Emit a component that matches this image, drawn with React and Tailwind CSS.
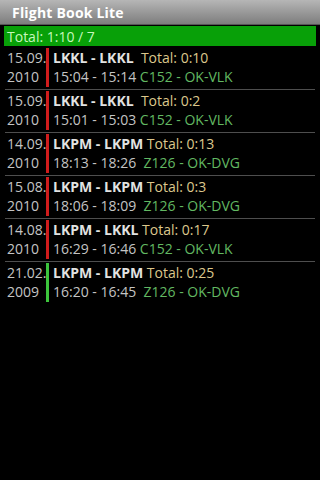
const flights = [
  { date: "15.09.", year: "2010", route: "LKKL - LKKL ", total: "Total: 0:10", time: "15:04 - 15:14", plane: "C152 - OK-VLK", ok: false },
  { date: "15.09.", year: "2010", route: "LKKL - LKKL ", total: "Total: 0:2", time: "15:01 - 15:03", plane: "C152 - OK-VLK", ok: false },
  { date: "14.09.", year: "2010", route: "LKPM - LKPM", total: "Total: 0:13", time: "18:13 - 18:26", plane: " Z126 - OK-DVG", ok: false },
  { date: "15.08.", year: "2010", route: "LKPM - LKPM", total: "Total: 0:3", time: "18:06 - 18:09", plane: " Z126 - OK-DVG", ok: false },
  { date: "14.08.", year: "2010", route: "LKPM - LKKL", total: "Total: 0:17", time: "16:29 - 16:46", plane: "C152 - OK-VLK", ok: false },
  { date: "21.02.", year: "2009", route: "LKPM - LKPM", total: "Total: 0:25", time: "16:20 - 16:45", plane: " Z126 - OK-DVG", ok: true },
];

const FlightRow = ({ f, last }) => (
  <div>
    <div className="flex h-[42px] pt-px">
      <div className="w-[46px] pl-[7px] text-[#c4c4c4] leading-[19px]">
        <div>{f.date}</div>
        <div>{f.year}</div>
      </div>
      <div className={`w-[3px] h-[39px] ${f.ok ? "bg-[#3cc43c]" : "bg-[#d01c1c]"}`} />
      <div className="pl-[4px] leading-[19px] whitespace-pre">
        <div>
          <span className="font-bold text-[#e2e2e2]">{f.route}</span>
          <span className="text-[#dcc78c]"> {f.total}</span>
        </div>
        <div>
          <span className="text-[#c4c4c4]">{f.time}</span>
          <span className="text-[#62b862]"> {f.plane}</span>
        </div>
      </div>
    </div>
    {!last && <div className="mx-[5px] h-px bg-[#4e4e4e]" />}
  </div>
);

export default function App() {
  return (
    <div className="w-[320px] h-[480px] bg-black overflow-hidden font-['Open_Sans','Noto_Sans',sans-serif] text-[14px]">
      <div className="h-[25px] bg-gradient-to-b from-[#b6b6b6] to-[#7e7e7e] border-b border-[#555] flex items-center pl-[12px]">
        <span className="font-bold text-white text-[14px] tracking-[0.2px]">Flight Book Lite</span>
      </div>
      <div className="mx-[4px] mt-px h-[20px] bg-[#08a008] flex items-center pl-[3px]">
        <span className="text-[#c6f7bc] text-[14px]">Total: 1:10 / 7</span>
      </div>
      <div className="mt-px">
        {flights.map((f, i) => (
          <FlightRow key={i} f={f} last={i === flights.length - 1} />
        ))}
      </div>
    </div>
  );
}
